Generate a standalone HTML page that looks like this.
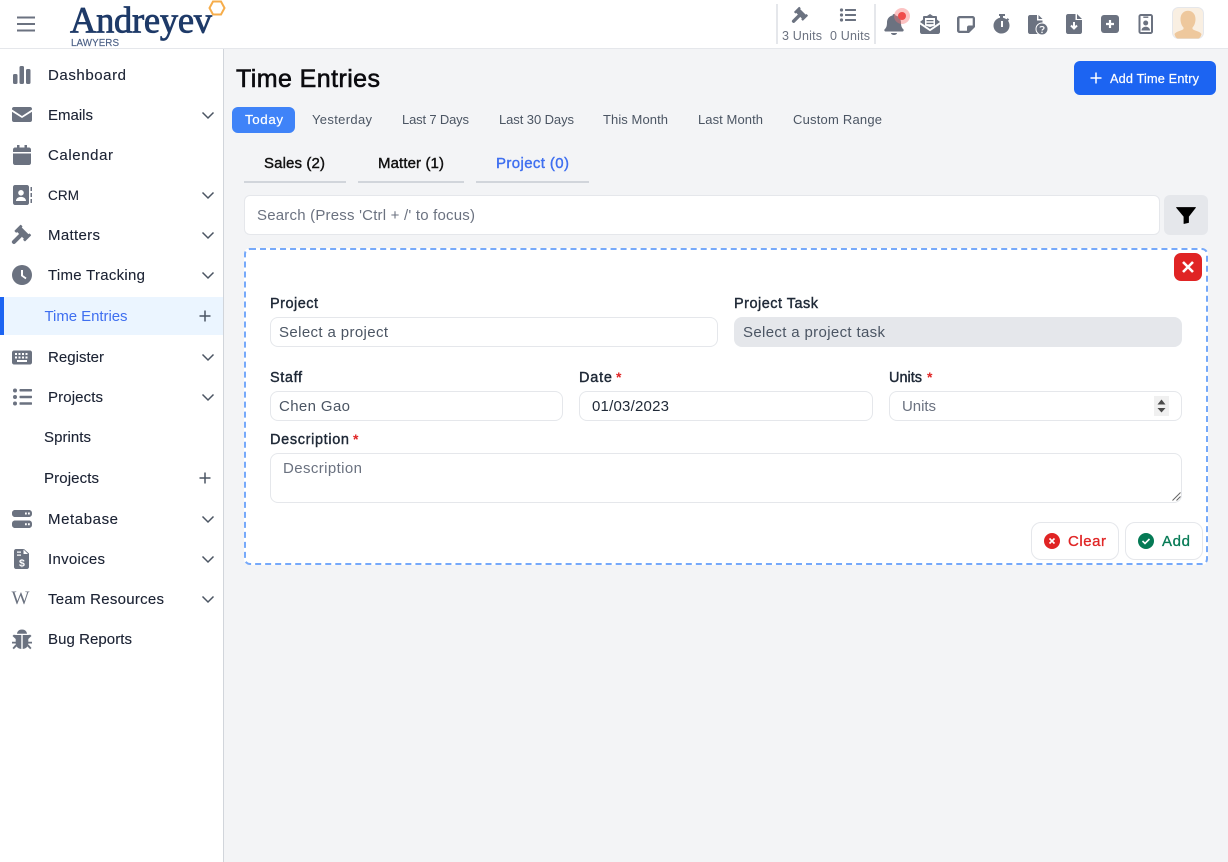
<!DOCTYPE html>
<html lang="en"><head><meta charset="utf-8"><title>Time Entries</title>
<style>
html,body{margin:0;padding:0;width:1228px;height:862px;overflow:hidden;background:#f3f4f6;font-family:"Liberation Sans",sans-serif}
.b{position:absolute;box-sizing:border-box}
.in{background:#fff;border:1px solid #e5e7eb;border-radius:8px}
svg{position:absolute;left:0;top:0}
text{font-family:"Liberation Sans",sans-serif;font-size:15px;fill:#111827}
.nav{fill:#1b2233;stroke:#1b2233;stroke-width:.12px}
.rng{font-size:13px;fill:#4b5563}
.lab{font-size:14.5px;fill:#1f2937;stroke:#1f2937;stroke-width:.4px}
.ph{fill:#6b7280}
.tab{font-size:15px;stroke-width:.4px;fill:#111;stroke:#111}
.i{fill:#6b7280}
.ch{fill:none;stroke:#4b5563;stroke-width:1.5}
.pl{fill:none;stroke:#4b5563;stroke-width:1.5}
</style></head><body>
<div class="b" style="left:0;top:0;width:1228px;height:862px;background:#f3f4f6"></div>
<div class="b" style="left:0;top:0;width:1228px;height:49px;background:#fff;border-bottom:1px solid #e5e7eb"></div>
<div class="b" style="left:0;top:49px;width:224px;height:813px;background:#fff;border-right:1px solid #d1d5db"></div>
<div class="b" style="left:0;top:297px;width:223px;height:38px;background:#ebf5ff;border-left:4px solid #1c64f2"></div>
<div class="b" style="left:1074px;top:61px;width:142px;height:34px;background:#1c64f2;border-radius:6px"></div>
<div class="b" style="left:232px;top:107px;width:63px;height:26px;background:#3f83f8;border-radius:6px"></div>
<div class="b" style="left:244px;top:181px;width:102px;height:2px;background:#d1d5db"></div>
<div class="b" style="left:358px;top:181px;width:106px;height:2px;background:#d1d5db"></div>
<div class="b" style="left:476px;top:181px;width:113px;height:2px;background:#d1d5db"></div>
<div class="b" style="left:244px;top:195px;width:916px;height:40px;background:#fff;border:1px solid #e5e7eb;border-radius:6px"></div>
<div class="b" style="left:1164px;top:195px;width:44px;height:40px;background:#e5e7eb;border-radius:6px"></div>
<div class="b" style="left:244px;top:248px;width:964px;height:317px;background:#fff;border:2px dashed #76a9fa;border-radius:6px"></div>
<div class="b" style="left:1174px;top:253px;width:28px;height:28px;background:#e02424;border-radius:7px"></div>
<div class="b in" style="left:270px;top:317px;width:448px;height:30px"></div>
<div class="b" style="left:734px;top:317px;width:448px;height:30px;background:#e5e7eb;border-radius:8px"></div>
<div class="b in" style="left:270px;top:391px;width:293px;height:30px"></div>
<div class="b in" style="left:579px;top:391px;width:294px;height:30px"></div>
<div class="b in" style="left:889px;top:391px;width:293px;height:30px"></div>
<div class="b" style="left:1154px;top:396px;width:15px;height:20px;background:#f0f0f0"></div>
<div class="b in" style="left:270px;top:453px;width:912px;height:50px"></div>
<div class="b" style="left:1031px;top:522px;width:88px;height:38px;background:#fff;border:1px solid #e5e7eb;border-radius:10px"></div>
<div class="b" style="left:1125px;top:522px;width:78px;height:38px;background:#fff;border:1px solid #e5e7eb;border-radius:10px"></div>

<svg width="1228" height="862" viewBox="0 0 1228 862">
<defs>
<g id="gavel">
<g transform="rotate(45 10 6)"><rect x="4.500" y="3" width="11" height="6"/><rect x="3" y="1.800" width="2.600" height="8.400" rx=".6"/><rect x="14.400" y="1.800" width="2.600" height="8.400" rx=".6"/></g>
<path d="M7.500 8.500L1.800 14.200" stroke="#6b7280" stroke-width="3.800" stroke-linecap="round" fill="none"/>
</g>
</defs>
<!-- hamburger -->
<path d="M17 17.500H35M17 24H35M17 30.500H35" stroke="#6b7280" stroke-width="2" fill="none"/>
<!-- logo -->
<text x="70" y="32.500" textLength="142" lengthAdjust="spacing" style="font-family:'Liberation Serif',serif;font-size:36.500px;fill:#1e3a68;stroke:#1e3a68;stroke-width:.8px">Andreyev</text>
<text x="71" y="46" textLength="48" lengthAdjust="spacing" style="font-size:9.800px;fill:#4a5f85;stroke:#4a5f85;stroke-width:.15px">LAWYERS</text>
<path d="M213 1.500H221L224.500 8L221 14.500H213L209.500 8Z" fill="none" stroke="#f6ad4b" stroke-width="2"/>

<!-- header units -->
<path d="M777 4V44M875 4V44" stroke="#e5e7eb" stroke-width="2"/>
<g class="i">
<use href="#gavel" transform="translate(792,8.400) scale(.9)"/>
<circle cx="841.500" cy="10" r="1.600"/><circle cx="841.500" cy="15" r="1.600"/><circle cx="841.500" cy="20" r="1.600"/>
<rect x="845" y="9" width="11" height="2" rx=".5"/><rect x="845" y="14" width="11" height="2" rx=".5"/><rect x="845" y="19" width="11" height="2" rx=".5"/>
</g>
<text x="782" y="40" textLength="40" lengthAdjust="spacing" style="font-size:12.500px;fill:#6b7280">3 Units</text>
<text x="830" y="40" textLength="40" lengthAdjust="spacing" style="font-size:12.500px;fill:#6b7280">0 Units</text>

<!-- top icons -->
<g class="i">
<path d="M894 14c1 0 1.500.8 1.500 1.500 3.500.7 5.500 3.500 5.500 7 0 4 1 5.500 2.500 7 .5.600 0 2-1 2h-17c-1 0-1.500-1.400-1-2 1.500-1.500 2.500-3 2.500-7 0-3.500 2-6.300 5.500-7 0-.7.500-1.500 1.500-1.500zM891 33h6c0 1-1.300 2-3 2s-3-1-3-2z"/>
<path fill-rule="evenodd" d="M930 14L933 16H936a1 1 0 0 1 1 1V19.500L940 22L930 29L920 22L923 19.500V17a1 1 0 0 1 1-1H927ZM925 18V25.500L930 27L935 25.500V18ZM926.500 20H933.500V21.300H926.500ZM926.500 22.800H933.500V24.100H926.500Z"/>
<path d="M920 24.500L930 31.200L940 24.500V32c0 1.100-.9 2-2 2H922c-1.100 0-2-.9-2-2Z"/>
<path fill-rule="evenodd" d="M959.500 16h13c1.400 0 2.500 1.100 2.500 2.500V27l-6 6h-9.500c-1.400 0-2.500-1.100-2.500-2.500v-12c0-1.400 1.100-2.500 2.500-2.500zM959.500 18.300v12.400h7.500v-3.200c0-1.200.8-2 2-2h3.700v-7.200z"/>
<path fill-rule="evenodd" d="M999 14h6v2h-2v1.700c1.300.2 2.500.8 3.500 1.600l1.200-1.200 1.500 1.500-1.200 1.200c.9 1.300 1.500 2.800 1.500 4.700a8 8 0 1 1-9.500-7.800V16h-1zM1001 21v6h2v-6z"/>
<path d="M1028 17c0-1.100.9-2 2-2h7v5.500h5.500v3a6 6 0 0 0-4.500 10.500h-8c-1.100 0-2-.9-2-2zM1038.500 15l4 4h-4z"/>
<circle cx="1042" cy="29" r="6" stroke="#fff" stroke-width="1"/>
<path d="M1040 27.500c.2-1.200 3.800-1.400 4 .3.100 1.500-1.800 1.300-2 2.700" fill="none" stroke="#fff" stroke-width="1.200"/><circle cx="1042" cy="32.300" r=".8" fill="#fff"/>
<path d="M1068 14h7.500v6h6.500v12c0 1.100-.9 2-2 2h-12c-1.100 0-2-.9-2-2V16c0-1.100.9-2 2-2zM1077 14l5 5h-5z"/>
<rect x="1101" y="15" width="18" height="18" rx="3"/>
<path fill-rule="evenodd" d="M1141 14h9.500c1.400 0 2.500 1.100 2.500 2.500v15c0 1.400-1.100 2.500-2.500 2.500H1141c-1.400 0-2.500-1.100-2.500-2.500v-15c0-1.400 1.100-2.500 2.500-2.500zM1140.500 16v16h10.500V16z"/>
<circle cx="1145.700" cy="23" r="2.500"/><path d="M1141.500 30.500c0-5 8.500-5 8.500 0z"/>
<rect x="1143.300" y="16.500" width="5" height="1.400"/>
</g>
<path d="M1074 22v6.500M1071 25.500l3 3 3-3" fill="none" stroke="#fff" stroke-width="2"/>
<path d="M1110 20v8M1106 24h8" stroke="#fff" stroke-width="2.200"/>
<circle cx="902" cy="16" r="8" fill="#f87171" fill-opacity=".42"/><circle cx="902" cy="16" r="4" fill="#f04b4b"/>
<!-- avatar -->
<rect x="1172.500" y="7.500" width="31" height="31" rx="6" fill="#f9efe2" stroke="#e5e7eb"/>
<path d="M1180.500 19c0-11 15-11 15 0 0 4-1.500 7-3 8.500v1.500c1 1.500 7 2 9 5-.4 2.200-1.500 4-3 4.500h-21c-1.500-.5-2.600-2.300-3-4.500 2-3 8-3.500 9-5v-1.500c-1.500-1.500-3-4.500-3-8.500z" fill="#eec89d"/>

<!-- sidebar icons -->
<g class="i">
<rect x="13" y="74" width="4.500" height="10" rx="1.500"/><rect x="19.500" y="66" width="4.500" height="18" rx="1.500"/><rect x="26" y="69" width="4.500" height="15" rx="1.500"/>
<path d="M12 109c0-1.200.8-2 2-2h16c1.200 0 2 .8 2 2v.5l-10 6.500-10-6.500zM12 111.700l10 6.300 10-6.300V120c0 1.200-.8 2-2 2H14c-1.200 0-2-.8-2-2z"/>
<path d="M17 145h2.500v2.500h5V145H27v2.500h2c1.100 0 2 .9 2 2V152H13v-2.500c0-1.100.9-2 2-2h2zM13 153.500h18V163c0 1.100-.9 2-2 2H15c-1.100 0-2-.9-2-2z"/>
<path fill-rule="evenodd" d="M15 185h12c1.100 0 2 .9 2 2v16c0 1.100-.9 2-2 2H15c-1.100 0-2-.9-2-2v-16c0-1.100.9-2 2-2zM21 190a2.800 2.800 0 1 0 0 5.600 2.800 2.800 0 0 0 0-5.600zM16 201h10c0-5.500-10-5.500-10 0z"/>
<rect x="30.500" y="187" width="1.500" height="4"/><rect x="30.500" y="193" width="1.500" height="4"/><rect x="30.500" y="199" width="1.500" height="4"/>
<use href="#gavel" transform="translate(12,226.600) scale(1.080)"/>
<path fill-rule="evenodd" d="M22 265a10 10 0 1 1 0 20 10 10 0 0 1 0-20zM21 270v6l4.500 3.300 1-1.500-3.500-2.600V270z"/>
<path fill-rule="evenodd" d="M14 350.500h16c1.100 0 2 .9 2 2v10c0 1.100-.9 2-2 2H14c-1.100 0-2-.9-2-2v-10c0-1.100.9-2 2-2zM15 353v2h2v-2zm3.500 0v2h2v-2zm3.500 0v2h2v-2zm3.500 0v2h2v-2zM15 356.500v2h2v-2zm3.500 0v2h2v-2zm3.500 0v2h2v-2zm3.500 0v2h2v-2zM17 360v2h10v-2z"/>
<circle cx="15" cy="390.500" r="2"/><circle cx="15" cy="397" r="2"/><circle cx="15" cy="403.500" r="2"/>
<rect x="19.500" y="389" width="12.500" height="2.500" rx=".7"/><rect x="19.500" y="395.700" width="12.500" height="2.500" rx=".7"/><rect x="19.500" y="402.300" width="12.500" height="2.500" rx=".7"/>
<path fill-rule="evenodd" d="M15 510h14c1.700 0 3 1.300 3 3v1c0 1.700-1.300 3-3 3H15c-1.700 0-3-1.300-3-3v-1c0-1.700 1.300-3 3-3zM25 512.500v2h1.800v-2zm3 0v2h1.800v-2zM15 520.500h14c1.700 0 3 1.300 3 3v1.500c0 1.700-1.300 3-3 3H15c-1.700 0-3-1.300-3-3v-1.500c0-1.700 1.300-3 3-3zM25 523.300v2h1.800v-2zm3 0v2h1.800v-2z"/>
<path fill-rule="evenodd" d="M16 549h8l5 4.500V567c0 1.100-.9 2-2 2H16c-1.100 0-2-.9-2-2v-16c0-1.100.9-2 2-2zM23.500 549.500v4.500h4.500l-4.500-4.500zM17 551.500v1.300h4v-1.300zM17 554.500v1.300h4v-1.300z"/>
<path d="M22 629.500c2.800 0 4.700 1.700 5 4.200H17c.3-2.500 2.200-4.200 5-4.200zM16 635h5.300v14c-3.300-.3-5.300-2.300-5.600-5.500H12v-1.800h3.700V639l-3.200-3 1.200-1.300zM28 635h-5.300v14c3.300-.3 5.300-2.300 5.600-5.500H32v-1.800h-3.700V639l3.200-3-1.200-1.300z"/>
<path d="M15.500 644.500l-3 3.500 1.300 1.200 3.200-3.200zM28.500 644.500l3 3.500-1.300 1.200-3.200-3.200z"/>
</g>
<text x="11.500" y="604" textLength="21" lengthAdjust="spacing" style="font-family:'Liberation Serif',serif;font-size:19px;fill:#6b7280">W</text>
<text x="19" y="566.500" style="font-size:10.500px;font-weight:bold;fill:#fff">$</text>

<!-- sidebar text -->
<text class="nav" x="48" y="80" textLength="78" lengthAdjust="spacing">Dashboard</text>
<text class="nav" x="48" y="120" textLength="45" lengthAdjust="spacing">Emails</text>
<text class="nav" x="48" y="160" textLength="65" lengthAdjust="spacing">Calendar</text>
<text class="nav" x="48" y="200" textLength="31" lengthAdjust="spacing" style="font-size:13.500px">CRM</text>
<text class="nav" x="48" y="240" textLength="52" lengthAdjust="spacing">Matters</text>
<text class="nav" x="48" y="280" textLength="97" lengthAdjust="spacing">Time Tracking</text>
<text x="44.500" y="321" textLength="83" lengthAdjust="spacing" style="fill:#3f6ff0">Time Entries</text>
<text class="nav" x="48" y="362" textLength="56" lengthAdjust="spacing">Register</text>
<text class="nav" x="48" y="402" textLength="55" lengthAdjust="spacing">Projects</text>
<text class="nav" x="44" y="442" textLength="47" lengthAdjust="spacing">Sprints</text>
<text class="nav" x="44" y="483" textLength="55" lengthAdjust="spacing">Projects</text>
<text class="nav" x="48" y="524" textLength="70" lengthAdjust="spacing">Metabase</text>
<text class="nav" x="48" y="564" textLength="57" lengthAdjust="spacing">Invoices</text>
<text class="nav" x="48" y="604" textLength="116" lengthAdjust="spacing">Team Resources</text>
<text class="nav" x="48" y="644" textLength="84" lengthAdjust="spacing">Bug Reports</text>
<path class="ch" d="M202.500 112.500L208 118L213.500 112.500M202.500 192.500L208 198L213.500 192.500M202.500 232.500L208 238L213.500 232.500M202.500 272.500L208 278L213.500 272.500M202.500 354.500L208 360L213.500 354.500M202.500 394.500L208 400L213.500 394.500M202.500 516.500L208 522L213.500 516.500M202.500 556.500L208 562L213.500 556.500M202.500 596.500L208 602L213.500 596.500"/>
<path class="pl" d="M205 310.500V321.500M199.500 316H210.500M205 472.500V483.500M199.500 478H210.500"/>

<!-- main heading -->
<text x="236" y="87" textLength="144" lengthAdjust="spacing" style="font-size:25px;fill:#0b0b0f;stroke:#0b0b0f;stroke-width:.6px">Time Entries</text>
<path d="M1096 72.500V83.500M1090.500 78H1101.500" stroke="#fff" stroke-width="1.500"/>
<text x="1110" y="83" textLength="89" lengthAdjust="spacing" style="font-size:12.700px;fill:#fff;stroke:#fff;stroke-width:.2px">Add Time Entry</text>

<!-- ranges -->
<text x="245" y="124" textLength="38" lengthAdjust="spacing" style="font-size:13.300px;fill:#fff;stroke:#fff;stroke-width:.2px">Today</text>
<text class="rng" x="312" y="124" textLength="60" lengthAdjust="spacing">Yesterday</text>
<text class="rng" x="402" y="124" textLength="67" lengthAdjust="spacing">Last 7 Days</text>
<text class="rng" x="499" y="124" textLength="75" lengthAdjust="spacing">Last 30 Days</text>
<text class="rng" x="603" y="124" textLength="65" lengthAdjust="spacing">This Month</text>
<text class="rng" x="698" y="124" textLength="65" lengthAdjust="spacing">Last Month</text>
<text class="rng" x="793" y="124" textLength="89" lengthAdjust="spacing">Custom Range</text>

<!-- tabs -->
<text class="tab" x="264" y="168" textLength="61" lengthAdjust="spacing">Sales (2)</text>
<text class="tab" x="378" y="168" textLength="66" lengthAdjust="spacing">Matter (1)</text>
<text class="tab" x="496" y="168" textLength="73" lengthAdjust="spacing" style="fill:#3f6ff0;stroke:#3f6ff0">Project (0)</text>

<!-- search -->
<text class="ph" x="257" y="220" textLength="218" lengthAdjust="spacing">Search (Press 'Ctrl + /' to focus)</text>
<path d="M1176.500 207.500H1195.500L1188.500 216.500V222.500L1184 223.500V216.500Z" fill="#000" stroke="#000" stroke-width=".8" stroke-linejoin="round"/>

<!-- close -->
<path d="M1183 262L1193 272M1193 262L1183 272" stroke="#fff" stroke-width="2.600"/>

<!-- form -->
<text class="lab" x="270" y="308" textLength="48" lengthAdjust="spacing">Project</text>
<text class="lab" x="734" y="308" textLength="84" lengthAdjust="spacing">Project Task</text>
<text x="279" y="337" textLength="109" lengthAdjust="spacing" style="fill:#4b5563">Select a project</text>
<text x="743" y="337" textLength="142" lengthAdjust="spacing" style="fill:#4b5563">Select a project task</text>
<text class="lab" x="270" y="382" textLength="32" lengthAdjust="spacing">Staff</text>
<text class="lab" x="579" y="382" textLength="33" lengthAdjust="spacing">Date</text>
<text x="616" y="382" style="fill:#e02424;font-weight:bold;font-size:14px">*</text>
<text class="lab" x="889" y="382" textLength="33" lengthAdjust="spacing">Units</text>
<text x="927" y="382" style="fill:#e02424;font-weight:bold;font-size:14px">*</text>
<text x="279" y="411" textLength="71" lengthAdjust="spacing" style="fill:#4b5563">Chen Gao</text>
<text x="592" y="411" textLength="77" lengthAdjust="spacing" style="fill:#1f2937">01/03/2023</text>
<text class="ph" x="902" y="411" textLength="34" lengthAdjust="spacing">Units</text>
<path d="M1161.500 399.500L1165.500 404.500H1157.500ZM1161.500 412.500L1157.500 408H1165.500Z" fill="#4b4b4b"/>
<text class="lab" x="270" y="444" textLength="79" lengthAdjust="spacing">Description</text>
<text x="353" y="444" style="fill:#e02424;font-weight:bold;font-size:14px">*</text>
<text class="ph" x="283" y="473" textLength="79" lengthAdjust="spacing">Description</text>
<path d="M1172.500 500.500L1180.500 492.500M1176.500 500.500L1180.500 496.500" stroke="#666" stroke-width="1"/>

<!-- buttons -->
<circle cx="1052" cy="541" r="8" fill="#e02424"/>
<path d="M1049.500 538.500L1054.500 543.500M1054.500 538.500L1049.500 543.500" stroke="#fff" stroke-width="1.600"/>
<text x="1068" y="546" textLength="38" lengthAdjust="spacing" style="fill:#e02424;stroke:#e02424;stroke-width:.3px">Clear</text>
<circle cx="1146" cy="541" r="8" fill="#057a55"/>
<path d="M1142.500 541L1145 543.500L1149.500 539" fill="none" stroke="#fff" stroke-width="1.600"/>
<text x="1162" y="546" textLength="28" lengthAdjust="spacing" style="fill:#057a55;stroke:#057a55;stroke-width:.3px">Add</text>
</svg>
</body></html>
